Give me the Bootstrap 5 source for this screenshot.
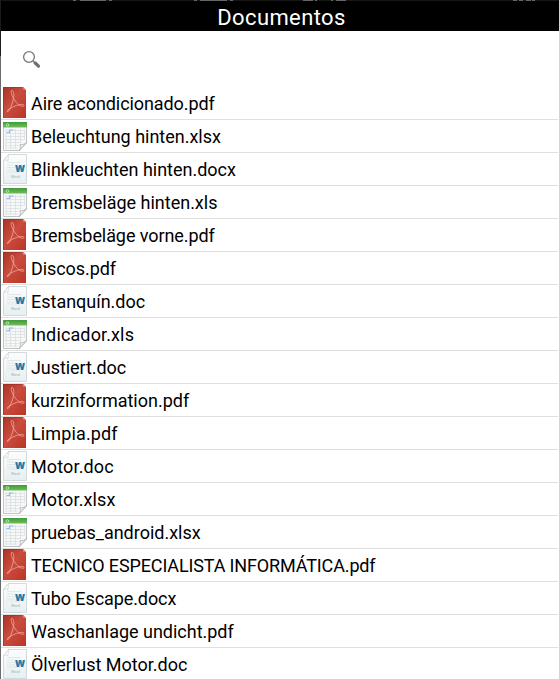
<!DOCTYPE html>
<html lang="es">
<head>
<meta charset="utf-8">
<meta name="viewport" content="width=device-width, initial-scale=1">
<title>Documentos</title>
<link href="https://cdn.jsdelivr.net/npm/bootstrap@5.3.0/dist/css/bootstrap.min.css" rel="stylesheet">
<style>
body{font-family:Roboto,"Liberation Sans",sans-serif;height:679px;background:#fff}
.edge{width:1px;background:linear-gradient(#1c1c1c 56px,#6b6b6b 56px)}
.title-bar{height:31px;background:#000;border-top:1px solid;border-image:linear-gradient(90deg,#161616 72px,#666 72px 75px,#161616 75px 79px,#666 79px 105px,#161616 105px 108px,#666 108px 111px,#161616 111px 193px,#666 193px 196px,#161616 196px 199px,#666 199px 226px,#161616 226px 229px,#666 229px 232px,#161616 232px 302px,#666 302px 312px,#161616 312px 314px,#666 314px 316px,#161616 316px 330px,#666 330px 332px,#161616 332px 335px,#666 335px 345px,#161616 345px 512px,#666 512px 516px,#161616 516px 518px,#666 518px 522px,#161616 522px 525px,#666 525px 530px,#161616 530px 531px,#666 531px 534px,#161616 534px) 1 0 0 0}
.title-bar h1{font-size:22px;line-height:32px;font-weight:400;letter-spacing:.38px;padding:1px 0 0 3px}
.search-bar{height:56px;padding:19px 0 0 21px}
.doc-row{height:33px;border:0;border-bottom:1px solid #dfdfdf;padding:0 0 0 2px;margin-right:1px;font-size:18px;line-height:33px;color:#000;white-space:nowrap}
.doc-row svg{width:24px;height:32px;flex:none}
.doc-name{margin-left:4px;letter-spacing:-.01px}
.doc-name.loose{letter-spacing:.13px}
.doc-name.tight{letter-spacing:-.08px}
.doc-name.caps{letter-spacing:-.14px}
</style>
<script src="https://cdn.jsdelivr.net/npm/bootstrap@5.3.0/dist/js/bootstrap.bundle.min.js"></script>
</head>
<body class="d-flex overflow-hidden">
<svg width="0" height="0" class="position-absolute" aria-hidden="true">
<defs>
<linearGradient id="red" x1="0" y1="0" x2="1" y2="1"><stop offset="0" stop-color="#a93224"/><stop offset=".45" stop-color="#c94c3e"/><stop offset="1" stop-color="#bb3526"/></linearGradient>
<linearGradient id="green" x1="0" y1="0" x2="0" y2="1"><stop offset="0" stop-color="#3f9a3c"/><stop offset="1" stop-color="#6fbe58"/></linearGradient>
<linearGradient id="paper" x1="0" y1="0" x2="0" y2="1"><stop offset="0" stop-color="#fcfdfd"/><stop offset="1" stop-color="#e6eff2"/></linearGradient>
<symbol id="pdf" viewBox="0 0 24 32">
<path d="M0 0h20l3 3v28H0z" fill="url(#red)"/><path d="M20 0l3 3-3-.3z" fill="#d98074"/>
<path d="M.5 31V.5h18" fill="none" stroke="#8f2b20" stroke-opacity=".5"/>
<path d="M4.500 24.500c-1-2 5.500-4.500 9-6 4-1.500 7.500-1.500 7.500 0s-4 1-7.500-3C10 12 7 4.500 8.500 3.500s3.500 3 1.500 10c-1.500 6-4 11.500-5.500 11z" fill="none" stroke="#efaaa0" stroke-width=".8"/>
</symbol>
<symbol id="xls" viewBox="0 0 24 32">
<path d="M.5 2.500h23v20.500l-7 7.500H.5z" fill="#f7f9f9" stroke="#bfc5c5"/>
<path d="M0 2h24v5.500H0z" fill="url(#green)"/>
<circle cx="4.500" cy="5" r="1.300" fill="none" stroke="#c9ecc0" stroke-width=".8"/>
<path d="M2.500 10.500h19M2.500 13.500h19M2.500 16.500h19M2.500 19.500h18M2.500 22.500h16M2.500 25.500h13M2.500 28h12M3 9v20M7.500 9v20M12.500 9v20M17.500 9v14M21.500 9v11" stroke="#d9dee1" stroke-width=".8"/>
<path d="M3.500 12.500h3v-2.500h4" fill="none" stroke="#8fbdee" stroke-width="1.200"/>
<path d="M16 31c1.500-2 1.500-4 1-6.500 2 .5 5-.2 7-2.500z" fill="#eceeee" stroke="#aeb3b3" stroke-width=".8"/>
</symbol>
<symbol id="doc" viewBox="0 0 24 32">
<path d="M5.500 1.500h18v29H.5v-23z" fill="url(#paper)" stroke="#c8d0d3" stroke-width=".8"/>
<path d="M.5 7.500c2-.8 3-.5 4.500 0 .2-2 0-4 .5-6z" fill="#fff" stroke="#cbd0d2" stroke-width=".7"/>
<path d="M4 9.500h14M4 12h8M4 14.500h8M4 17h8M4 19h14" stroke="#e0e5e7" stroke-width=".9"/>
<text x="12" y="18.700" font-family="Open Sans,sans-serif" font-weight="800" font-size="12.500" textLength="10" lengthAdjust="spacingAndGlyphs" fill="#1d7ca8">w</text>
<text x="8" y="25" font-family="Roboto,sans-serif" font-weight="400" font-size="3.800" fill="#a8aeb1">Word</text>
</symbol>
</defs></svg>
<div class="edge flex-shrink-0"></div>
<main class="flex-grow-1">
<header class="title-bar text-white text-center"><h1 class="m-0">Documentos</h1></header>
<div class="search-bar"><svg class="d-block" width="20" height="20" viewBox="0 0 20 20" role="img" aria-label="Buscar"><circle cx="7" cy="7" r="5.400" fill="none" stroke="#777" stroke-width="1.300"/><path d="M11 11l2 2" stroke="#777" stroke-width="1.500"/><path d="M13.200 13l3.300 3.200" stroke="#707070" stroke-width="3.200" stroke-linecap="round"/></svg></div>
<div class="list-group list-group-flush">
<div class="list-group-item doc-row d-flex"><svg><use href="#pdf"/></svg><span class="doc-name tight">Aire acondicionado.pdf</span></div>
<div class="list-group-item doc-row d-flex"><svg><use href="#xls"/></svg><span class="doc-name">Beleuchtung hinten.xlsx</span></div>
<div class="list-group-item doc-row d-flex"><svg><use href="#doc"/></svg><span class="doc-name">Blinkleuchten hinten.docx</span></div>
<div class="list-group-item doc-row d-flex"><svg><use href="#xls"/></svg><span class="doc-name">Bremsbeläge hinten.xls</span></div>
<div class="list-group-item doc-row d-flex"><svg><use href="#pdf"/></svg><span class="doc-name tight">Bremsbeläge vorne.pdf</span></div>
<div class="list-group-item doc-row d-flex"><svg><use href="#pdf"/></svg><span class="doc-name tight">Discos.pdf</span></div>
<div class="list-group-item doc-row d-flex"><svg><use href="#doc"/></svg><span class="doc-name">Estanquín.doc</span></div>
<div class="list-group-item doc-row d-flex"><svg><use href="#xls"/></svg><span class="doc-name loose">Indicador.xls</span></div>
<div class="list-group-item doc-row d-flex"><svg><use href="#doc"/></svg><span class="doc-name tight">Justiert.doc</span></div>
<div class="list-group-item doc-row d-flex"><svg><use href="#pdf"/></svg><span class="doc-name">kurzinformation.pdf</span></div>
<div class="list-group-item doc-row d-flex"><svg><use href="#pdf"/></svg><span class="doc-name loose">Limpia.pdf</span></div>
<div class="list-group-item doc-row d-flex"><svg><use href="#doc"/></svg><span class="doc-name loose">Motor.doc</span></div>
<div class="list-group-item doc-row d-flex"><svg><use href="#xls"/></svg><span class="doc-name loose">Motor.xlsx</span></div>
<div class="list-group-item doc-row d-flex"><svg><use href="#xls"/></svg><span class="doc-name">pruebas_android.xlsx</span></div>
<div class="list-group-item doc-row d-flex"><svg><use href="#pdf"/></svg><span class="doc-name caps">TECNICO ESPECIALISTA INFORMÁTICA.pdf</span></div>
<div class="list-group-item doc-row d-flex"><svg><use href="#doc"/></svg><span class="doc-name tight">Tubo Escape.docx</span></div>
<div class="list-group-item doc-row d-flex"><svg><use href="#pdf"/></svg><span class="doc-name">Waschanlage undicht.pdf</span></div>
<div class="list-group-item doc-row d-flex"><svg><use href="#doc"/></svg><span class="doc-name">Ölverlust Motor.doc</span></div>
</div>
</main>
</body>
</html>
